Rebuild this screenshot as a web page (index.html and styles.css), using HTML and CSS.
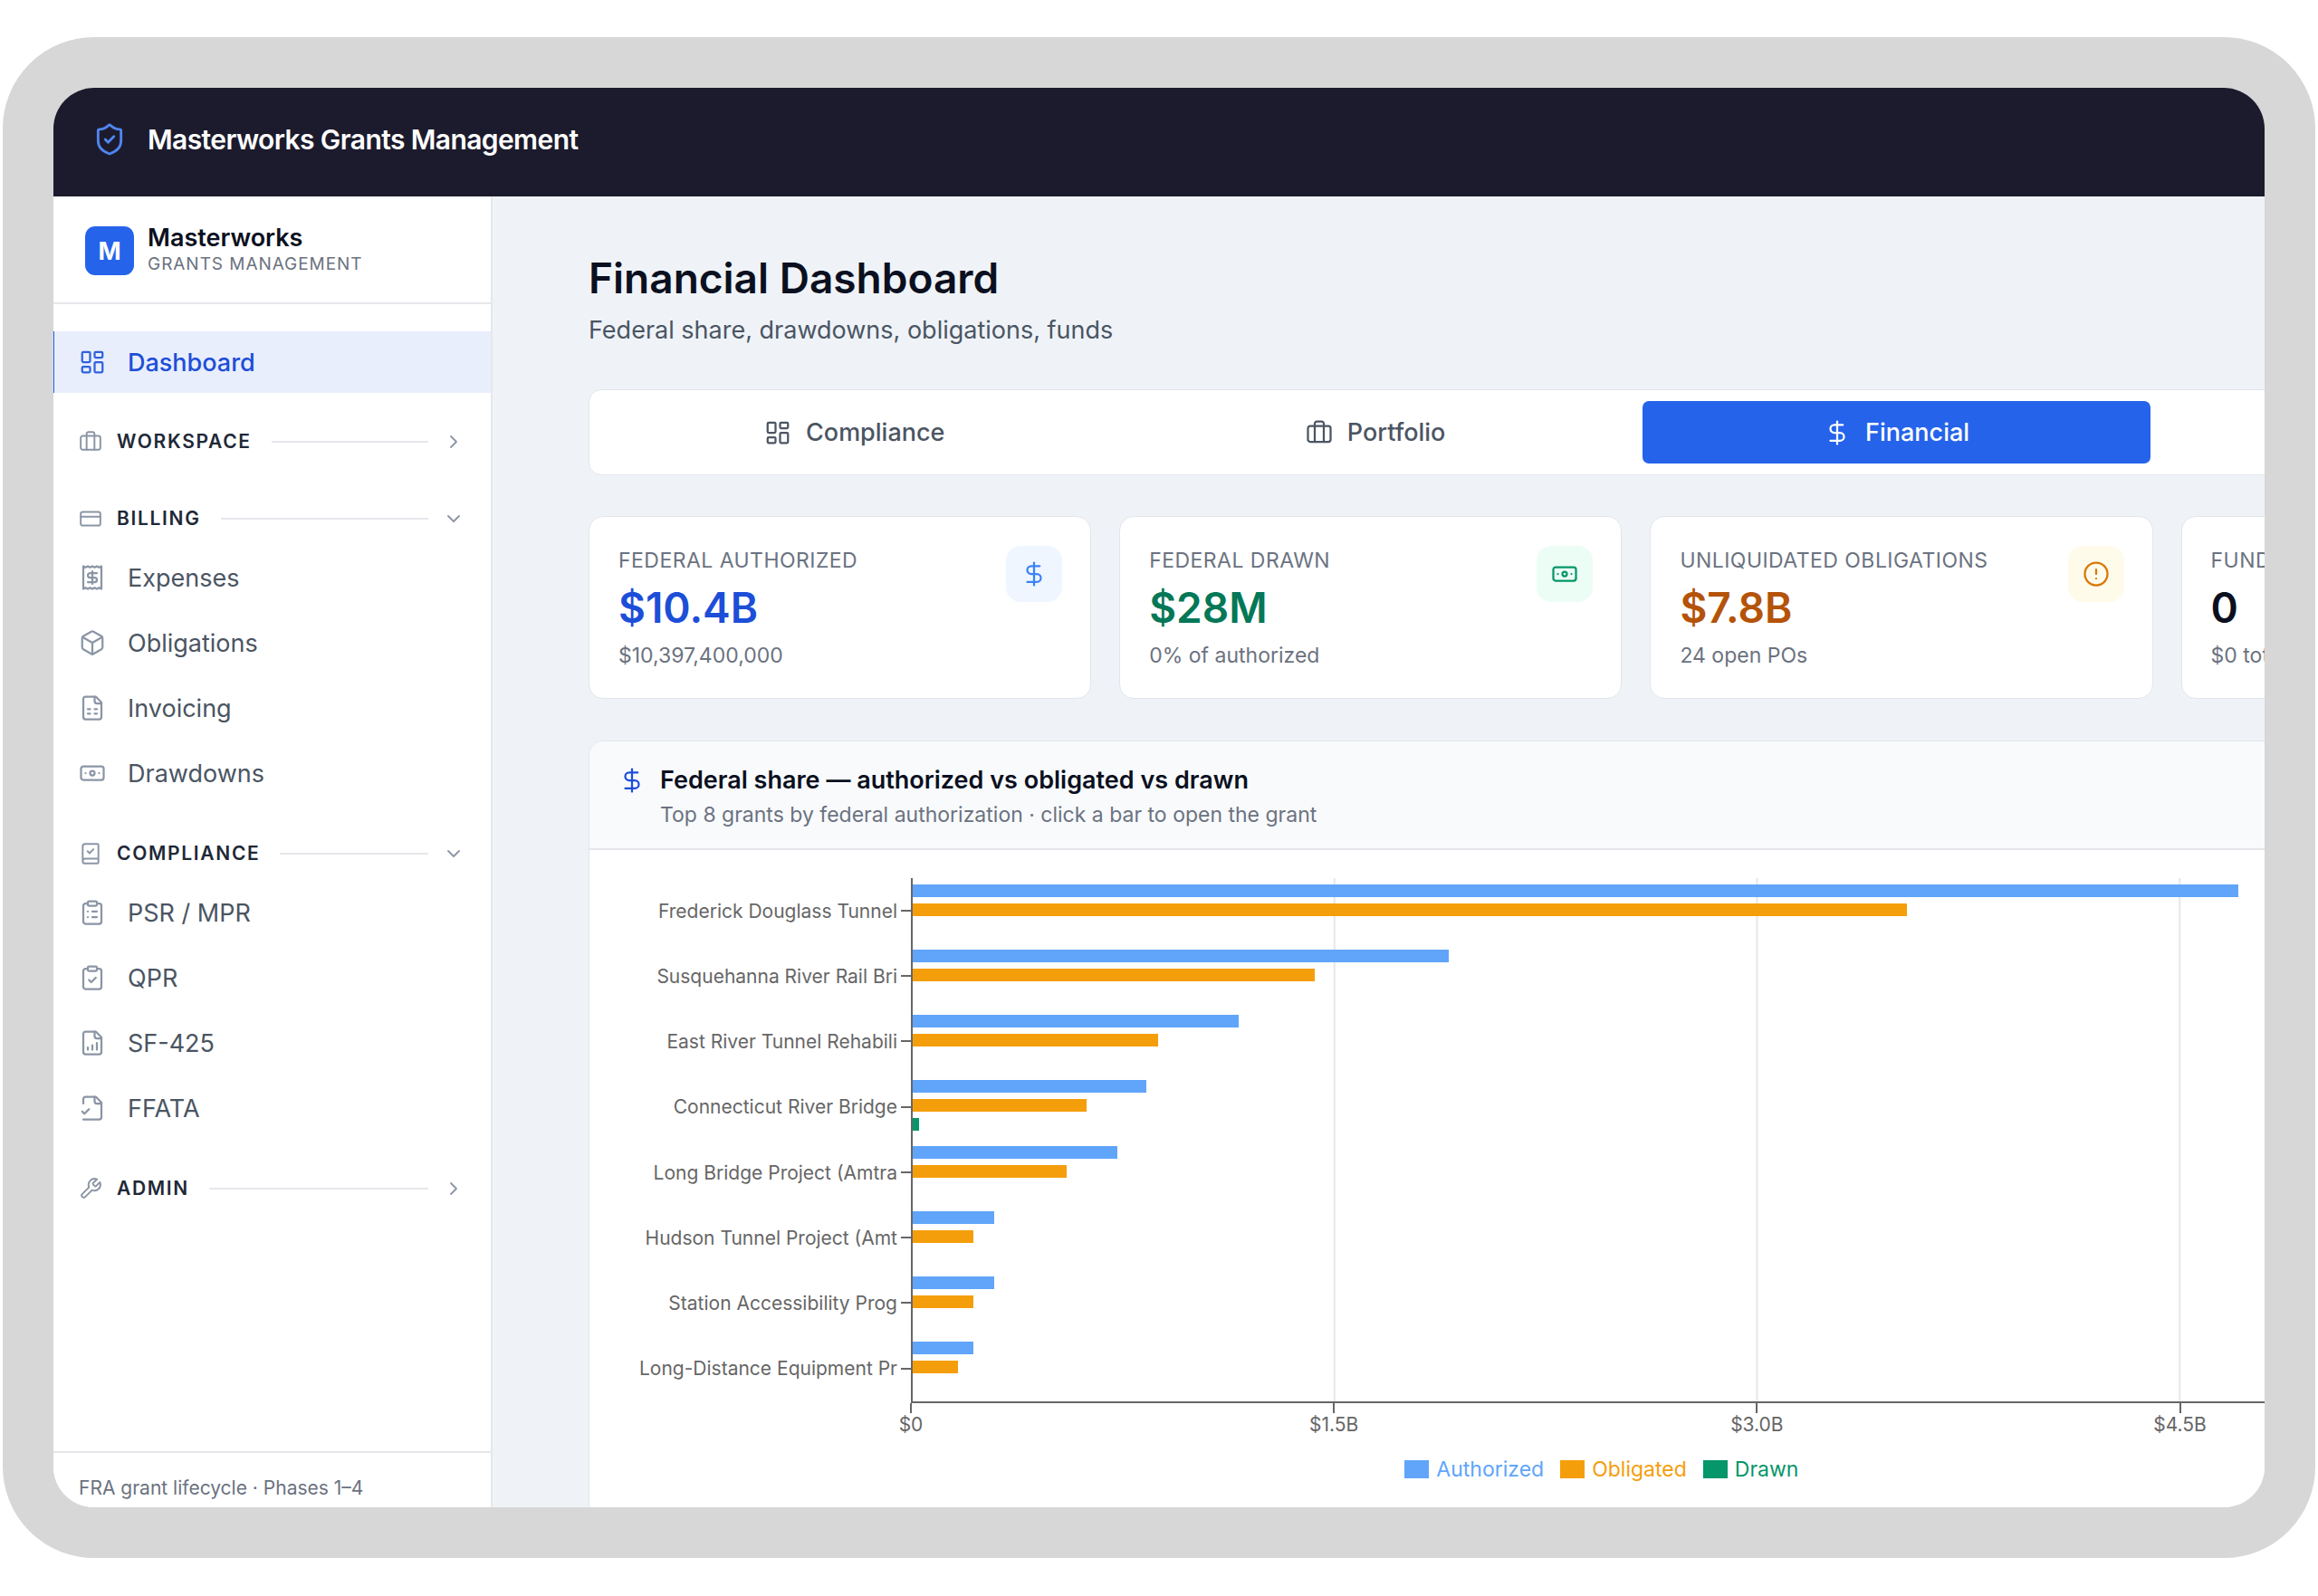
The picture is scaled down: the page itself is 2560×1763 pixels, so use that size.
FILE: index.html
```html
<!DOCTYPE html>
<html lang="en">
<head>
    <meta charset="UTF-8">
    <title>Masterworks Grants Management</title>
    <meta name="viewport" content="width=device-width, initial-scale=1.0">
    <link rel="stylesheet" href="styles.css">
</head>
<body>
    <!-- Icon sprite -->
    <svg class="sprite" aria-hidden="true">
        <symbol id="i-shield" viewBox="0 0 24 24"><path d="M20 13c0 5-3.5 7.5-7.66 8.95a1 1 0 0 1-.67-.01C7.5 20.5 4 18 4 13V6a1 1 0 0 1 1-1c2 0 4.5-1.2 6.24-2.72a1.17 1.17 0 0 1 1.52 0C14.51 3.81 17 5 19 5a1 1 0 0 1 1 1z"/><path d="m9 12 2 2 4-4"/></symbol>
        <symbol id="i-dashboard" viewBox="0 0 24 24"><rect x="3" y="3" width="7" height="9" rx="1"/><rect x="14" y="3" width="7" height="5" rx="1"/><rect x="14" y="12" width="7" height="9" rx="1"/><rect x="3" y="16" width="7" height="5" rx="1"/></symbol>
        <symbol id="i-briefcase" viewBox="0 0 24 24"><path d="M16 20V4a2 2 0 0 0-2-2h-4a2 2 0 0 0-2 2v16"/><rect x="2" y="6" width="20" height="14" rx="2"/></symbol>
        <symbol id="i-card" viewBox="0 0 24 24"><rect x="2" y="5" width="20" height="14" rx="2"/><path d="M2 10h20"/></symbol>
        <symbol id="i-receipt" viewBox="0 0 24 24"><path d="M4 2v20l2-1 2 1 2-1 2 1 2-1 2 1 2-1 2 1V2l-2 1-2-1-2 1-2-1-2 1-2-1-2 1Z"/><path d="M16 8h-6a2 2 0 1 0 0 4h4a2 2 0 1 1 0 4H8"/><path d="M12 17.5v-11"/></symbol>
        <symbol id="i-box" viewBox="0 0 24 24"><path d="M21 8a2 2 0 0 0-1-1.73l-7-4a2 2 0 0 0-2 0l-7 4A2 2 0 0 0 3 8v8a2 2 0 0 0 1 1.73l7 4a2 2 0 0 0 2 0l7-4A2 2 0 0 0 21 16Z"/><path d="m3.3 7 8.7 5 8.7-5"/><path d="M12 22V12"/></symbol>
        <symbol id="i-sheet" viewBox="0 0 24 24"><path d="M15 2H6a2 2 0 0 0-2 2v16a2 2 0 0 0 2 2h12a2 2 0 0 0 2-2V7Z"/><path d="M14 2v4a2 2 0 0 0 2 2h4"/><path d="M8 13h2M14 13h2M8 17h2M14 17h2"/></symbol>
        <symbol id="i-banknote" viewBox="0 0 24 24"><rect x="2" y="6" width="20" height="12" rx="2"/><circle cx="12" cy="12" r="2"/><path d="M6 12h.01M18 12h.01"/></symbol>
        <symbol id="i-book" viewBox="0 0 24 24"><path d="M4 19.5v-15A2.5 2.5 0 0 1 6.5 2H19a1 1 0 0 1 1 1v18a1 1 0 0 1-1 1H6.5a1 1 0 0 1 0-5H20"/><path d="m9 9.5 2 2 4-4"/></symbol>
        <symbol id="i-cliplist" viewBox="0 0 24 24"><rect x="8" y="2" width="8" height="4" rx="1"/><path d="M16 4h2a2 2 0 0 1 2 2v14a2 2 0 0 1-2 2H6a2 2 0 0 1-2-2V6a2 2 0 0 1 2-2h2"/><path d="M12 11h4M12 16h4M8 11h.01M8 16h.01"/></symbol>
        <symbol id="i-clipcheck" viewBox="0 0 24 24"><rect x="8" y="2" width="8" height="4" rx="1"/><path d="M16 4h2a2 2 0 0 1 2 2v14a2 2 0 0 1-2 2H6a2 2 0 0 1-2-2V6a2 2 0 0 1 2-2h2"/><path d="m9 14 2 2 4-4"/></symbol>
        <symbol id="i-filechart" viewBox="0 0 24 24"><path d="M15 2H6a2 2 0 0 0-2 2v16a2 2 0 0 0 2 2h12a2 2 0 0 0 2-2V7Z"/><path d="M14 2v4a2 2 0 0 0 2 2h4"/><path d="M8 18v-2M12 18v-4M16 18v-6"/></symbol>
        <symbol id="i-filecheck" viewBox="0 0 24 24"><path d="M4 22h14a2 2 0 0 0 2-2V7l-5-5H6a2 2 0 0 0-2 2v4"/><path d="M14 2v4a2 2 0 0 0 2 2h4"/><path d="m3 15 2 2 4-4"/></symbol>
        <symbol id="i-wrench" viewBox="0 0 24 24"><path d="M14.7 6.3a1 1 0 0 0 0 1.4l1.6 1.6a1 1 0 0 0 1.4 0l3.77-3.77a6 6 0 0 1-7.94 7.94l-6.91 6.91a2.12 2.12 0 0 1-3-3l6.91-6.91a6 6 0 0 1 7.94-7.94l-3.76 3.76z"/></symbol>
        <symbol id="i-dollar" viewBox="0 0 24 24"><path d="M12 2v20"/><path d="M17 5H9.5a3.5 3.5 0 0 0 0 7h5a3.5 3.5 0 0 1 0 7H6"/></symbol>
        <symbol id="i-alert" viewBox="0 0 24 24"><circle cx="12" cy="12" r="10"/><path d="M12 8v4M12 16h.01"/></symbol>
        <symbol id="i-right" viewBox="0 0 24 24"><path d="m9 18 6-6-6-6"/></symbol>
        <symbol id="i-down" viewBox="0 0 24 24"><path d="m6 9 6 6 6-6"/></symbol>
    </svg>

    <div class="frame">
        <header class="topbar">
            <svg class="icon icon-lg"><use href="#i-shield"/></svg>
            <span class="topbar-title">Masterworks Grants Management</span>
        </header>

        <div class="layout">
            <!-- Sidebar -->
            <aside class="sidebar">
                <div class="brand">
                    <span class="brand-logo">M</span>
                    <div>
                        <div class="brand-name">Masterworks</div>
                        <div class="brand-sub">Grants Management</div>
                    </div>
                </div>

                <nav class="nav">
                    <a href="#dashboard" class="nav-item active"><svg class="icon"><use href="#i-dashboard"/></svg>Dashboard</a>

                    <section class="group">
                        <button type="button" class="group-head" aria-expanded="false">
                            <svg class="icon icon-sm"><use href="#i-briefcase"/></svg>
                            <span>Workspace</span>
                            <svg class="icon chevron"><use href="#i-right"/></svg>
                        </button>
                    </section>

                    <section class="group">
                        <button type="button" class="group-head" aria-expanded="true">
                            <svg class="icon icon-sm"><use href="#i-card"/></svg>
                            <span>Billing</span>
                            <svg class="icon chevron"><use href="#i-down"/></svg>
                        </button>
                        <div class="group-items">
                            <a href="#expenses" class="nav-item"><svg class="icon"><use href="#i-receipt"/></svg>Expenses</a>
                            <a href="#obligations" class="nav-item"><svg class="icon"><use href="#i-box"/></svg>Obligations</a>
                            <a href="#invoicing" class="nav-item"><svg class="icon"><use href="#i-sheet"/></svg>Invoicing</a>
                            <a href="#drawdowns" class="nav-item"><svg class="icon"><use href="#i-banknote"/></svg>Drawdowns</a>
                        </div>
                    </section>

                    <section class="group">
                        <button type="button" class="group-head" aria-expanded="true">
                            <svg class="icon icon-sm"><use href="#i-book"/></svg>
                            <span>Compliance</span>
                            <svg class="icon chevron"><use href="#i-down"/></svg>
                        </button>
                        <div class="group-items">
                            <a href="#psr" class="nav-item"><svg class="icon"><use href="#i-cliplist"/></svg>PSR / MPR</a>
                            <a href="#qpr" class="nav-item"><svg class="icon"><use href="#i-clipcheck"/></svg>QPR</a>
                            <a href="#sf425" class="nav-item"><svg class="icon"><use href="#i-filechart"/></svg>SF-425</a>
                            <a href="#ffata" class="nav-item"><svg class="icon"><use href="#i-filecheck"/></svg>FFATA</a>
                        </div>
                    </section>

                    <section class="group">
                        <button type="button" class="group-head" aria-expanded="false">
                            <svg class="icon icon-sm"><use href="#i-wrench"/></svg>
                            <span>Admin</span>
                            <svg class="icon chevron"><use href="#i-right"/></svg>
                        </button>
                    </section>
                </nav>

                <footer class="sidebar-foot">FRA grant lifecycle · Phases 1–4</footer>
            </aside>

            <!-- Main area, runs past the right edge of the screen -->
            <main class="main">
                <div class="content">
                    <h1 class="page-title">Financial Dashboard</h1>
                    <p class="page-sub">Federal share, drawdowns, obligations, funds</p>

                    <div class="tabs">
                        <button type="button" class="tab"><svg class="icon"><use href="#i-dashboard"/></svg>Compliance</button>
                        <button type="button" class="tab"><svg class="icon"><use href="#i-briefcase"/></svg>Portfolio</button>
                        <button type="button" class="tab active"><svg class="icon"><use href="#i-dollar"/></svg>Financial</button>
                    </div>

                    <div class="cards">
                        <div class="card">
                            <div>
                                <div class="card-label">Federal Authorized</div>
                                <div class="card-value blue">$10.4B</div>
                                <div class="card-note">$10,397,400,000</div>
                            </div>
                            <span class="badge badge-blue"><svg class="icon"><use href="#i-dollar"/></svg></span>
                        </div>
                        <div class="card">
                            <div>
                                <div class="card-label">Federal Drawn</div>
                                <div class="card-value green">$28M</div>
                                <div class="card-note">0% of authorized</div>
                            </div>
                            <span class="badge badge-green"><svg class="icon"><use href="#i-banknote"/></svg></span>
                        </div>
                        <div class="card">
                            <div>
                                <div class="card-label">Unliquidated Obligations</div>
                                <div class="card-value amber">$7.8B</div>
                                <div class="card-note">24 open POs</div>
                            </div>
                            <span class="badge badge-amber"><svg class="icon"><use href="#i-alert"/></svg></span>
                        </div>
                        <div class="card">
                            <div>
                                <div class="card-label">Funds</div>
                                <div class="card-value">0</div>
                                <div class="card-note">$0 total</div>
                            </div>
                        </div>
                    </div>

                    <section class="panel">
                        <div class="panel-head">
                            <svg class="icon"><use href="#i-dollar"/></svg>
                            <div>
                                <h2 class="panel-title">Federal share — authorized vs obligated vs drawn</h2>
                                <p class="panel-sub">Top 8 grants by federal authorization · click a bar to open the grant</p>
                            </div>
                        </div>

                        <div class="chart">
                            <div class="row">
                                <span class="row-label">Frederick Douglass Tunnel</span>
                                <div class="track">
                                    <div class="bar authorized" style="width: 78.4%"></div>
                                    <div class="bar obligated" style="width: 58.8%"></div>
                                </div>
                            </div>
                            <div class="row">
                                <span class="row-label">Susquehanna River Rail Bri</span>
                                <div class="track">
                                    <div class="bar authorized" style="width: 31.7%"></div>
                                    <div class="bar obligated" style="width: 23.8%"></div>
                                </div>
                            </div>
                            <div class="row">
                                <span class="row-label">East River Tunnel Rehabili</span>
                                <div class="track">
                                    <div class="bar authorized" style="width: 19.3%"></div>
                                    <div class="bar obligated" style="width: 14.5%"></div>
                                </div>
                            </div>
                            <div class="row">
                                <span class="row-label">Connecticut River Bridge</span>
                                <div class="track">
                                    <div class="bar authorized" style="width: 13.8%"></div>
                                    <div class="bar obligated" style="width: 10.3%"></div>
                                    <div class="bar drawn" style="width: 0.4%"></div>
                                </div>
                            </div>
                            <div class="row">
                                <span class="row-label">Long Bridge Project (Amtra</span>
                                <div class="track">
                                    <div class="bar authorized" style="width: 12.1%"></div>
                                    <div class="bar obligated" style="width: 9.1%"></div>
                                </div>
                            </div>
                            <div class="row">
                                <span class="row-label">Hudson Tunnel Project (Amt</span>
                                <div class="track">
                                    <div class="bar authorized" style="width: 4.8%"></div>
                                    <div class="bar obligated" style="width: 3.6%"></div>
                                </div>
                            </div>
                            <div class="row">
                                <span class="row-label">Station Accessibility Prog</span>
                                <div class="track">
                                    <div class="bar authorized" style="width: 4.8%"></div>
                                    <div class="bar obligated" style="width: 3.6%"></div>
                                </div>
                            </div>
                            <div class="row">
                                <span class="row-label">Long-Distance Equipment Pr</span>
                                <div class="track">
                                    <div class="bar authorized" style="width: 3.6%"></div>
                                    <div class="bar obligated" style="width: 2.7%"></div>
                                </div>
                            </div>

                            <div class="axis">
                                <div class="ticks">
                                    <span>$0</span>
                                    <span>$1.5B</span>
                                    <span>$3.0B</span>
                                    <span>$4.5B</span>
                                </div>
                            </div>

                            <div class="legend">
                                <span class="legend-item key-authorized">Authorized</span>
                                <span class="legend-item key-obligated">Obligated</span>
                                <span class="legend-item key-drawn">Drawn</span>
                            </div>
                        </div>
                    </section>
                </div>
            </main>
        </div>
    </div>
</body>
</html>
```

FILE: styles.css
```css
* {
    margin: 0;
    padding: 0;
    box-sizing: border-box;
}

body {
    background-color: #ffffff;
    font-family: Inter, "Liberation Sans", sans-serif;
    font-size: 27px;
    color: #0b1020;
}

a {
    color: inherit;
    text-decoration: none;
}

button {
    border: none;
    background: none;
    font: inherit;
    color: inherit;
    cursor: pointer;
}

.sprite {
    display: none;
}

/* Icons */
.icon {
    width: 30px;
    height: 30px;
    flex-shrink: 0;
    fill: none;
    stroke: currentColor;
    stroke-width: 1.8;
    stroke-linecap: round;
    stroke-linejoin: round;
}

.icon-sm {
    width: 26px;
    height: 26px;
}

.icon-lg {
    width: 38px;
    height: 38px;
    color: #4f86f0;
}

/* Device frame */
.frame {
    display: flex;
    flex-direction: column;
    height: calc(100vh - 83px);
    margin: 41px 3px 42px;
    border: 56px solid #d7d7d7;
    border-radius: 101px;
    overflow: hidden;
}

/* Top bar */
.topbar {
    display: flex;
    align-items: center;
    gap: 23px;
    height: 120px;
    padding: 0 43px 6px;
    background-color: #1c1b2d;
    color: #ffffff;
    flex-shrink: 0;
}

.topbar-title {
    font-size: 30px;
    font-weight: 600;
    letter-spacing: -0.02em;
}

.layout {
    display: flex;
    flex: 1;
    min-height: 0;
}

/* Sidebar */
.sidebar {
    display: flex;
    flex-direction: column;
    width: 485px;
    flex-shrink: 0;
    background-color: #ffffff;
    border-right: 2px solid #e5e7eb;
}

.brand {
    display: flex;
    align-items: center;
    gap: 15px;
    padding: 31px 35px 28px;
    border-bottom: 2px solid #e5e7eb;
}

.brand-logo {
    display: flex;
    align-items: center;
    justify-content: center;
    width: 54px;
    height: 54px;
    border-radius: 11px;
    background-color: #2563eb;
    color: #ffffff;
    font-weight: 700;
}

.brand-name {
    font-weight: 600;
    line-height: 30px;
}

.brand-sub {
    font-size: 19px;
    line-height: 28px;
    letter-spacing: 0.05em;
    text-transform: uppercase;
    color: #6b7280;
}

.nav {
    flex: 1;
    padding-top: 30px;
}

.nav-item {
    display: flex;
    align-items: center;
    gap: 24px;
    height: 68px;
    padding: 0 28px;
    color: #4b5563;
}

.nav-item .icon {
    color: #8b95a5;
}

.nav-item.active {
    background-color: #e8eefc;
    box-shadow: inset 1px 0 #2563eb;
    color: #1d4ed8;
    font-weight: 500;
}

.nav-item.active .icon {
    color: #2f62dd;
}

.group {
    margin-top: 22px;
}

.group-head {
    display: flex;
    align-items: center;
    gap: 16px;
    width: 100%;
    height: 63px;
    padding: 0 29px 0 28px;
    color: #8b95a5;
}

.group-head span {
    display: flex;
    flex: 1;
    align-items: center;
    gap: 22px;
    font-size: 21px;
    font-weight: 600;
    letter-spacing: 0.08em;
    text-transform: uppercase;
    color: #1f2937;
}

.group-head span::after {
    content: "";
    flex: 1;
    height: 2px;
    background-color: #e5e7eb;
}

.chevron {
    width: 24px;
    height: 24px;
}

.group-items {
    display: flex;
    flex-direction: column;
    gap: 4px;
    padding-bottom: 1px;
}

.sidebar-foot {
    padding: 24px 28px 6px;
    border-top: 2px solid #e5e7eb;
    font-size: 21px;
    line-height: 30px;
    color: #6b7280;
}

/* Main */
.main {
    flex: 1;
    min-width: 0;
    padding: 60px 0 0 106px;
    overflow: hidden;
    background-color: #eff3f8;
}

.content {
    width: 125%;
}

.page-title {
    font-size: 46px;
    font-weight: 600;
    line-height: 60px;
}

.page-sub {
    margin-top: 10px;
    line-height: 36px;
    color: #4b5563;
}

/* Tabs */
.tabs {
    display: grid;
    grid-template-columns: repeat(4, 1fr);
    gap: 14px;
    margin-top: 47px;
    padding: 12px;
    background-color: #ffffff;
    border: 1px solid #e2e6ec;
    border-radius: 14px;
}

.tab {
    display: flex;
    align-items: center;
    justify-content: center;
    gap: 16px;
    height: 69px;
    border-radius: 7px;
    font-weight: 500;
    color: #4b5563;
}

.tab.active {
    background-color: #2563eb;
    color: #ffffff;
}

/* Summary cards */
.cards {
    display: grid;
    grid-template-columns: repeat(4, 1fr);
    gap: 31px;
    margin-top: 45px;
}

.card {
    display: flex;
    justify-content: space-between;
    padding: 32px 31px 30px 32px;
    background-color: #ffffff;
    border: 1px solid #e2e6ec;
    border-radius: 16px;
}

.card-label {
    font-size: 23px;
    line-height: 32px;
    letter-spacing: 0.02em;
    text-transform: uppercase;
    color: #6b7280;
}

.card-value {
    font-size: 46px;
    font-weight: 600;
    line-height: 72px;
}

.card-note {
    font-size: 23px;
    line-height: 34px;
    color: #6b7280;
}

.blue {
    color: #1d4ed8;
}

.green {
    color: #047857;
}

.amber {
    color: #b45309;
}

.badge {
    display: flex;
    align-items: center;
    justify-content: center;
    width: 62px;
    height: 62px;
    border-radius: 16px;
}

.badge-blue {
    background-color: #eff6ff;
    color: #3b82f6;
}

.badge-green {
    background-color: #ecfdf5;
    color: #059669;
}

.badge-amber {
    background-color: #fffbeb;
    color: #d97706;
}

/* Chart panel */
.panel {
    margin-top: 46px;
    background-color: #ffffff;
    border: 1px solid #e2e6ec;
    border-radius: 16px;
    overflow: hidden;
}

.panel-head {
    display: flex;
    gap: 16px;
    padding: 24px 32px 18px;
    background-color: #f8fafc;
    border-bottom: 2px solid #e5e7eb;
}

.panel-head .icon {
    margin-top: 4px;
    color: #1d4ed8;
}

.panel-title {
    font-size: 27px;
    font-weight: 600;
    line-height: 38px;
}

.panel-sub {
    font-size: 23px;
    line-height: 38px;
    color: #6b7280;
}

.chart {
    padding: 31px 88px 60px 32px;
}

.row {
    display: grid;
    grid-template-columns: 323px 1fr;
    height: 72px;
}

.row:nth-child(4n) {
    height: 73px;
}

.row-label {
    display: flex;
    align-items: center;
    justify-content: flex-end;
    gap: 4px;
    font-size: 21px;
    color: #666666;
}

.row-label::after {
    content: "";
    width: 11px;
    height: 2px;
    background-color: #666666;
}

.track {
    display: flex;
    flex-direction: column;
    gap: 7px;
    padding-top: 7px;
    border-left: 2px solid #666666;
    background: linear-gradient(to right, transparent calc(100% - 2px), #e5e7eb 0) 0 0 / 25% 100%;
}

.bar {
    height: 14px;
}

.authorized {
    background-color: #60a5fa;
}

.obligated {
    background-color: #f59e0b;
}

.drawn {
    background-color: #059669;
}

.axis {
    margin-left: 323px;
    border-top: 2px solid #666666;
}

/* Half a column to the left, so that each label is centred on its grid line */
.ticks {
    display: grid;
    grid-template-columns: repeat(4, 1fr);
    margin: 0 12.5% 0 -12.5%;
    font-size: 21px;
    line-height: 26px;
    color: #666666;
}

.ticks span {
    display: flex;
    flex-direction: column;
    align-items: center;
}

.ticks span::before {
    content: "";
    width: 2px;
    height: 11px;
    background-color: #666666;
}

.legend {
    display: flex;
    justify-content: center;
    gap: 18px;
    margin-top: 20px;
    padding-right: 20px;
}

.legend-item {
    display: flex;
    align-items: center;
    gap: 8px;
    font-size: 23px;
    line-height: 32px;
}

.legend-item::before {
    content: "";
    width: 27px;
    height: 20px;
    background-color: currentColor;
}

.key-authorized {
    color: #60a5fa;
}

.key-obligated {
    color: #f59e0b;
}

.key-drawn {
    color: #059669;
}
```
